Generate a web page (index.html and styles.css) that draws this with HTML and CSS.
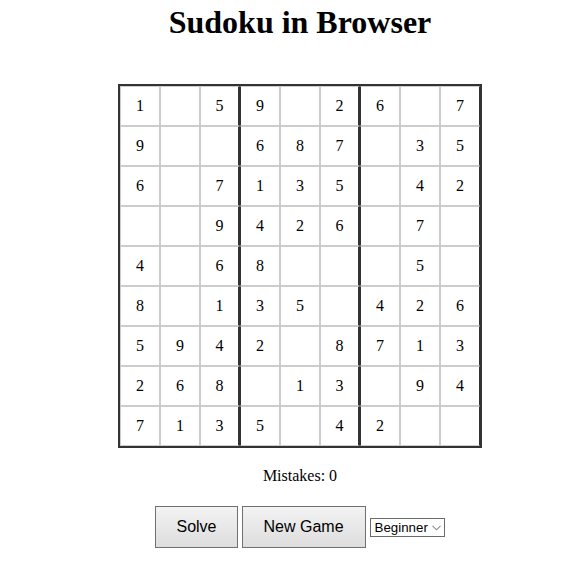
FILE: index.html
```html
<!DOCTYPE html>
<html>
<head>
<meta charset="utf-8">
<title>Sudoku in Browser</title>
<link rel="stylesheet" href="styles.css">
</head>
<body>
<div class="app">
  <h1 class="title">Sudoku in Browser</h1>
  <div class="board">
    <div class="cell">1</div><div class="cell"></div><div class="cell">5</div><div class="cell">9</div><div class="cell"></div><div class="cell">2</div><div class="cell">6</div><div class="cell"></div><div class="cell">7</div>
    <div class="cell">9</div><div class="cell"></div><div class="cell"></div><div class="cell">6</div><div class="cell">8</div><div class="cell">7</div><div class="cell"></div><div class="cell">3</div><div class="cell">5</div>
    <div class="cell">6</div><div class="cell"></div><div class="cell">7</div><div class="cell">1</div><div class="cell">3</div><div class="cell">5</div><div class="cell"></div><div class="cell">4</div><div class="cell">2</div>
    <div class="cell"></div><div class="cell"></div><div class="cell">9</div><div class="cell">4</div><div class="cell">2</div><div class="cell">6</div><div class="cell"></div><div class="cell">7</div><div class="cell"></div>
    <div class="cell">4</div><div class="cell"></div><div class="cell">6</div><div class="cell">8</div><div class="cell"></div><div class="cell"></div><div class="cell"></div><div class="cell">5</div><div class="cell"></div>
    <div class="cell">8</div><div class="cell"></div><div class="cell">1</div><div class="cell">3</div><div class="cell">5</div><div class="cell"></div><div class="cell">4</div><div class="cell">2</div><div class="cell">6</div>
    <div class="cell">5</div><div class="cell">9</div><div class="cell">4</div><div class="cell">2</div><div class="cell"></div><div class="cell">8</div><div class="cell">7</div><div class="cell">1</div><div class="cell">3</div>
    <div class="cell">2</div><div class="cell">6</div><div class="cell">8</div><div class="cell"></div><div class="cell">1</div><div class="cell">3</div><div class="cell"></div><div class="cell">9</div><div class="cell">4</div>
    <div class="cell">7</div><div class="cell">1</div><div class="cell">3</div><div class="cell">5</div><div class="cell"></div><div class="cell">4</div><div class="cell">2</div><div class="cell"></div><div class="cell"></div>
  </div>
  <p class="mistakes">Mistakes: 0</p>
  <div class="controls">
    <button class="btn btn-solve">Solve</button>
    <button class="btn">New Game</button>
    <span class="select-wrap">
      <select class="level">
        <option>Beginner</option>
        <option>Easy</option>
        <option>Medium</option>
        <option>Hard</option>
      </select>
      <svg class="chevron" width="9" height="6" viewBox="0 0 9 6" aria-hidden="true"><path d="M0.5 0.8 L4.5 4.8 L8.5 0.8" fill="none" stroke="#8a8a8a" stroke-width="1.1"/></svg>
    </span>
  </div>
</div>
</body>
</html>
```
FILE: styles.css
```css
html, body {
  margin: 0;
  padding: 0;
  background: #ffffff;
}

body {
  font-family: "Liberation Serif", "Times New Roman", serif;
  font-size: 16px;
  color: #000;
}

.app {
  padding-left: 19px;
  display: flex;
  flex-direction: column;
  align-items: center;
}

.title {
  font-size: 32px;
  font-weight: bold;
  margin: 4px 0 43px;
  line-height: 37px;
}

.board {
  display: grid;
  grid-template-columns: repeat(9, 40px);
  grid-template-rows: repeat(9, 40px);
  border: 2px solid #333;
}

.cell {
  box-sizing: border-box;
  border: 1px solid #ccc;
  display: flex;
  align-items: center;
  justify-content: center;
  font-size: 16px;
  line-height: 18px;
}

/* vertical box dividers */
.cell:nth-child(9n+3),
.cell:nth-child(9n+6) {
  border-right: 2px solid #333;
}
.cell:nth-child(9n+4),
.cell:nth-child(9n+7) {
  border-left-color: #333;
}
.cell:nth-child(9n) {
  border-right-color: #333;
}

.mistakes {
  margin: 19px 0 21px;
  line-height: 18px;
}

.controls {
  display: flex;
  align-items: center;
  gap: 4px;
}

.btn {
  font-family: "Liberation Sans", Arial, sans-serif;
  font-size: 16px;
  line-height: 18px;
  padding: 11px 21px;
  border: 1px solid #707070;
  border-radius: 0;
  background: linear-gradient(#f3f3f3, #dddddd);
  color: #000;
}

.btn-solve {
  padding-left: 20px;
  padding-right: 20px;
}

.select-wrap {
  position: relative;
  display: inline-flex;
  margin-top: 1px;
}

.level {
  appearance: none;
  -webkit-appearance: none;
  font-family: "Liberation Sans", Arial, sans-serif;
  font-size: 13.333px;
  line-height: 15px;
  width: 75px;
  height: 19px;
  padding: 0 0 0 4px;
  margin: 0;
  border: 1px solid #6b6b6b;
  border-radius: 0;
  background-color: #fff;
  color: #000;
}

.chevron {
  position: absolute;
  right: 4px;
  top: 7px;
  pointer-events: none;
}
```
